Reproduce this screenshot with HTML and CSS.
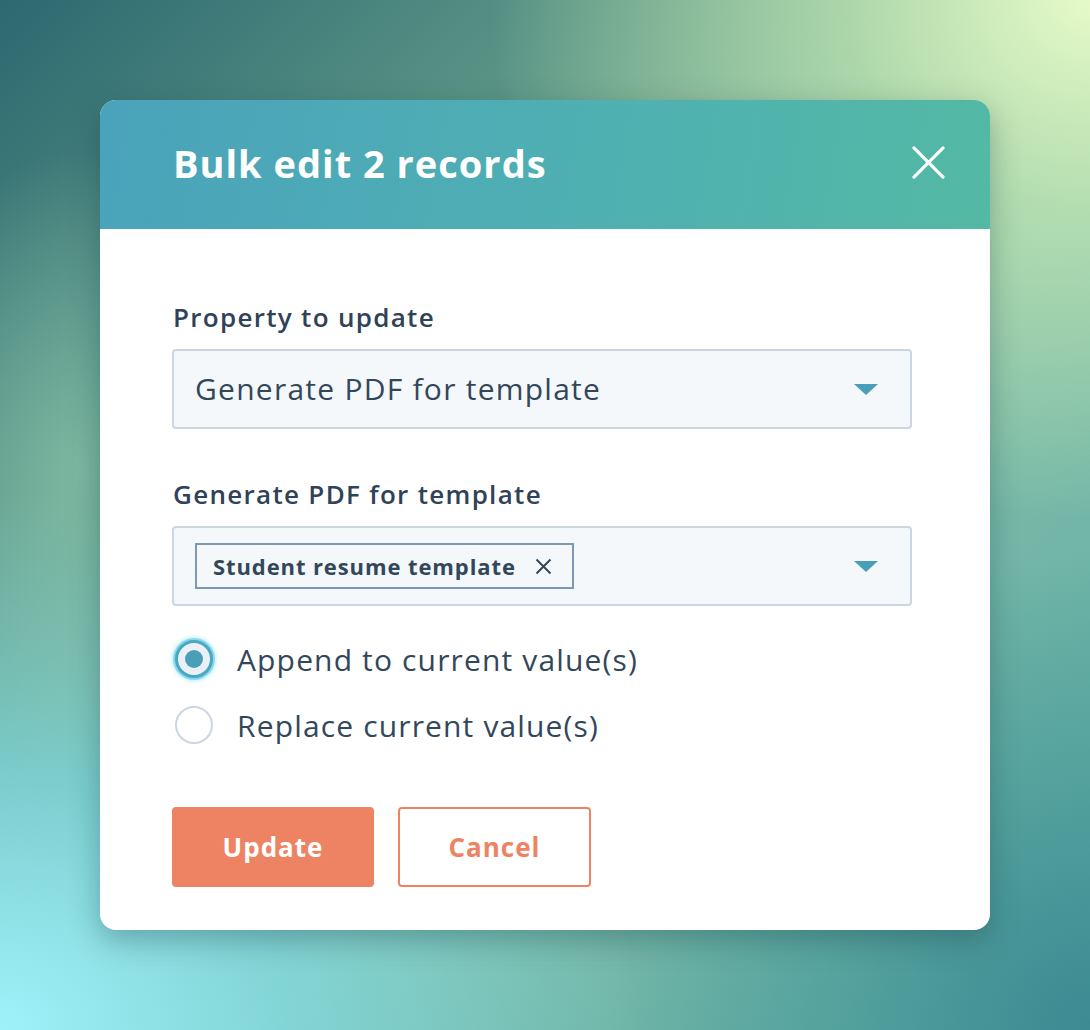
FILE: index.html
```html
<!DOCTYPE html>
<html>
<head>
<meta charset="utf-8">
<link rel="stylesheet" href="styles.css">
</head>
<body>
<div class="modal">
  <div class="modal-header">
    <h1 class="title">Bulk edit 2 records</h1>
    <button class="close" aria-label="Close">
      <svg width="34" height="34" viewBox="0 0 34 34"><path d="M2 2 L32 32 M32 2 L2 32" stroke="#fff" stroke-width="3.2" stroke-linecap="round" fill="none"/></svg>
    </button>
  </div>
  <div class="modal-body">
    <div class="field">
      <div class="label">Property to update</div>
      <div class="select">
        <span class="select-text">Generate PDF for template</span>
        <span class="caret"></span>
      </div>
    </div>
    <div class="field">
      <div class="label">Generate PDF for template</div>
      <div class="select">
        <span class="tag">Student resume template
          <svg class="tag-x" width="17" height="17" viewBox="0 0 17 17"><path d="M1.5 1.5 L15.5 15.5 M15.5 1.5 L1.5 15.5" stroke="#33475b" stroke-width="2" fill="none"/></svg>
        </span>
        <span class="caret"></span>
      </div>
    </div>
    <div class="radios">
      <label class="radio-row"><span class="radio checked"><span class="dot"></span></span><span class="radio-label">Append to current value(s)</span></label>
      <label class="radio-row"><span class="radio"></span><span class="radio-label">Replace current value(s)</span></label>
    </div>
    <div class="actions">
      <button class="btn primary">Update</button>
      <button class="btn secondary">Cancel</button>
    </div>
  </div>
</div>
</body>
</html>
```
FILE: styles.css
```css
html, body {
  margin: 0;
  padding: 0;
}
body {
  width: 1090px;
  height: 1030px;
  box-sizing: border-box;
  padding: 100px;
  font-family: "Open Sans", "DejaVu Sans", sans-serif;
  color: #33475b;
  overflow: hidden;
  background:
    radial-gradient(ellipse 200px 320px at 80px 470px, rgba(150, 210, 180, 0.6), rgba(150, 210, 180, 0) 100%),
    radial-gradient(ellipse 600px 520px at 1090px 0px, #e6fac8 0%, rgba(200, 235, 180, 0.7) 40%, rgba(160, 210, 170, 0) 100%),
    radial-gradient(ellipse 640px 540px at 0px 1030px, #9ff2fa 0%, rgba(130, 220, 228, 0.75) 45%, rgba(110, 200, 200, 0) 100%),
    radial-gradient(ellipse 480px 480px at 1090px 1030px, #3d8a93 0%, rgba(70, 150, 150, 0.6) 50%, rgba(90, 170, 160, 0) 100%),
    linear-gradient(135deg, #2d6870 0%, #66a08c 35%, #82bea8 60%, #5aaaa6 100%);
}
.modal {
  width: 890px;
  height: 830px;
  background: #fff;
  border-radius: 16px;
  overflow: hidden;
  box-shadow: 0 10px 30px rgba(20, 60, 70, 0.35);
  display: flex;
  flex-direction: column;
}
.modal-header {
  height: 129px;
  flex: none;
  display: flex;
  align-items: center;
  justify-content: space-between;
  padding: 0 45px 0 73px;
  background: linear-gradient(100deg, #4aa3bb 0%, #4fb0b2 55%, #53b9a4 100%);
}
.title {
  margin: 0;
  color: #fff;
  font-size: 38px;
  font-weight: 700;
  letter-spacing: 1px;
  line-height: 1;
  margin-top: -4px;
}
.close {
  background: none;
  border: 0;
  padding: 0;
  width: 33px;
  height: 33px;
  display: flex;
  margin-top: -5px;
}
.close svg {
  width: 33px;
  height: 33px;
}
.modal-body {
  padding: 71px 78px 0 72px;
}
.field {
  margin-bottom: 48px;
}
.field + .field {
  margin-bottom: 0;
}
.label {
  font-size: 26px;
  font-weight: 600;
  line-height: 34px;
  letter-spacing: 1.3px;
  padding-left: 1px;
  margin-bottom: 15px;
  color: #2f4257;
}
.select {
  height: 80px;
  box-sizing: border-box;
  border: 2px solid #cbd6e2;
  border-radius: 4px;
  background: #f5f8fa;
  display: flex;
  align-items: center;
  padding: 0 32px 0 21px;
}
.select-text {
  flex: 1;
  font-size: 30px;
  letter-spacing: 1.25px;
  color: #33475b;
  margin-top: -2px;
}
.caret {
  width: 0;
  height: 0;
  border-left: 12px solid transparent;
  border-right: 12px solid transparent;
  border-top: 11px solid #4a9fb8;
  margin-left: auto;
}
.tag {
  display: flex;
  align-items: center;
  height: 46px;
  box-sizing: border-box;
  border: 2px solid #7c98b6;
  padding: 0 20px 0 16px;
  font-size: 22px;
  font-weight: 700;
  letter-spacing: 0.9px;
  color: #33475b;
}
.tag-x {
  margin-left: 19px;
}
.radios {
  margin-top: 33px;
  display: flex;
  flex-direction: column;
  gap: 26px;
}
.radio-row {
  display: flex;
  align-items: center;
  height: 40px;
}
.radio {
  width: 38px;
  height: 38px;
  box-sizing: border-box;
  border-radius: 50%;
  border: 2px solid #cbd6e2;
  background: #fff;
  margin-left: 3px;
  display: flex;
  align-items: center;
  justify-content: center;
}
.radio.checked {
  border: 3px solid #4aa8c0;
  background: #eaf0f6;
  box-shadow: 0 0 0 2px rgba(110, 210, 235, 0.7), 0 0 5px 2px rgba(100, 210, 235, 0.6);
}
.dot {
  width: 18px;
  height: 18px;
  border-radius: 50%;
  background: #4a9fb8;
}
.radio-label {
  margin-left: 24px;
  font-size: 30px;
  letter-spacing: 1.15px;
  color: #33475b;
}
.actions {
  margin-top: 62px;
  display: flex;
  gap: 24px;
}
.btn {
  height: 80px;
  box-sizing: border-box;
  border-radius: 4px;
  font-family: "Open Sans", "DejaVu Sans", sans-serif;
  font-size: 26px;
  font-weight: 700;
  letter-spacing: 1px;
  padding: 0;
}
.primary {
  width: 202px;
  background: #ee8363;
  border: 2px solid #ee8363;
  color: #fff;
}
.secondary {
  width: 193px;
  background: #fff;
  border: 2px solid #ee8363;
  color: #ee8363;
}
```
